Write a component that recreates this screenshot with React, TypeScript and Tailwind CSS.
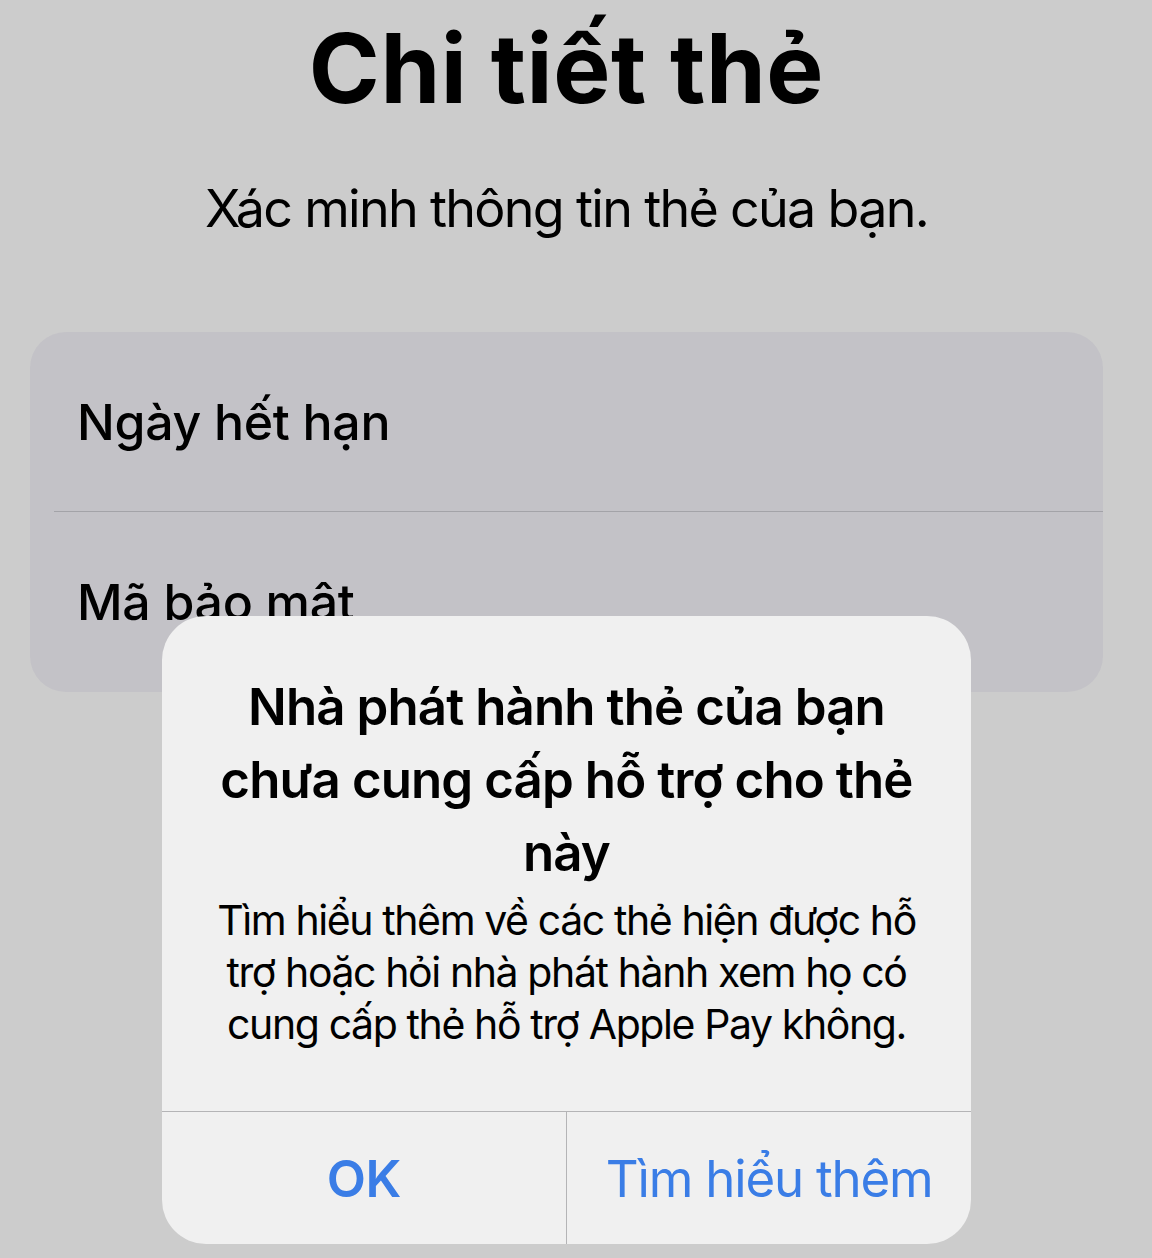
import React from "react";

const font = { fontFamily: "Inter, 'Noto Sans', sans-serif" };

const CardRow: React.FC<{ label: string; last?: boolean }> = ({ label, last }) => (
  <div className="relative flex h-[180px] items-center pl-[47px]">
    <span className="text-[50px] leading-none font-medium tracking-[-0.3px] text-black">{label}</span>
    {!last && <div className="absolute bottom-0 left-[24px] right-0 h-[1.5px] bg-[#a3a3a8]" />}
  </div>
);

const App: React.FC = () => {
  return (
    <div className="relative h-[1258px] w-full overflow-hidden bg-[#cccccc]" style={font}>
      {/* page behind the dimmed overlay */}
      <div className="flex w-[1133px] flex-col items-center pt-[20px]">
        <h1 className="text-[96px] leading-none font-bold tracking-[0.6px] text-black">Chi tiết thẻ</h1>
        <p className="mt-[67px] text-[52px] leading-none tracking-[-1.7px] text-black">Xác minh thông tin thẻ của bạn.</p>
      </div>

      <div className="mx-[30px] mt-[97px] w-[1073px] overflow-hidden rounded-[36px] bg-[#c3c2c7]">
        <CardRow label="Ngày hết hạn" />
        <CardRow label="Mã bảo mật" last />
      </div>

      {/* alert */}
      <div className="absolute left-[162px] top-[616px] w-[809px] overflow-hidden rounded-[44px] bg-[#f0f0f0]">
        <div className="flex flex-col items-center pt-[54px] pb-[61px] text-center text-black">
          <h2 className="text-[51px] leading-[73px] font-semibold tracking-[-0.9px] whitespace-nowrap">
            Nhà phát hành thẻ của bạn
            <br />
            chưa cung cấp hỗ trợ cho thẻ
            <br />
            này
          </h2>
          <p className="mt-[5px] text-[41px] leading-[52px] tracking-[-1.4px] whitespace-nowrap">
            Tìm hiểu thêm về các thẻ hiện được hỗ
            <br />
            trợ hoặc hỏi nhà phát hành xem họ có
            <br />
            cung cấp thẻ hỗ trợ Apple Pay không.
          </p>
        </div>
        <div className="flex h-[133px] border-t-[1.5px] border-[#b4b4b6]">
          <button className="flex flex-1 items-center justify-center text-[51px] leading-none font-semibold tracking-[-0.5px] text-[#3a7de6]">
            OK
          </button>
          <div className="w-[1.5px] bg-[#b4b4b6]" />
          <button className="flex flex-1 items-center justify-center text-[51px] leading-none tracking-[-1.2px] text-[#3a7de6]">
            Tìm hiểu thêm
          </button>
        </div>
      </div>
    </div>
  );
};

export default App;
